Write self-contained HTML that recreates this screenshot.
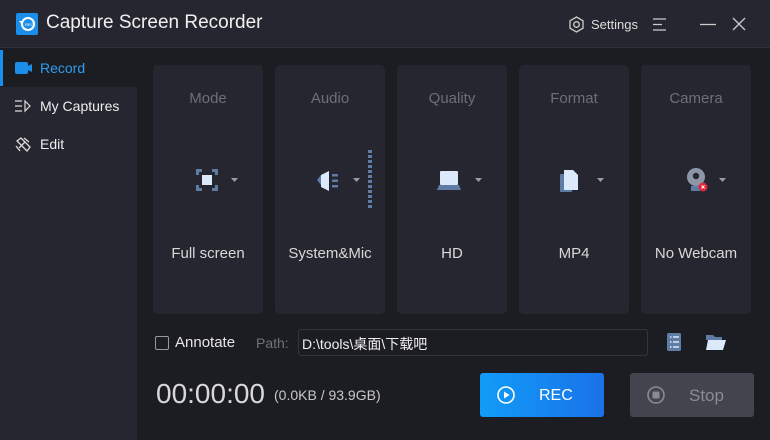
<!DOCTYPE html>
<html><head><meta charset="utf-8"><style>
*{margin:0;padding:0;box-sizing:border-box}
body{width:770px;height:440px;background:#1c1d22;font-family:"Liberation Sans","Noto Sans CJK SC",sans-serif;position:relative;overflow:hidden;color:#e6e6e6}
.title{position:absolute;left:0;top:0;width:770px;height:48px;background:#25262f;border-bottom:1px solid #30313a}
.abs{position:absolute}
.side{position:absolute;left:0;top:87px;width:137px;height:353px;background:#25262f}
.card{position:absolute;top:65px;width:110px;height:249px;background:#25262f;border-radius:5px;text-align:center}
.card .h{position:absolute;top:25px;width:100%;font-size:15px;color:#6e6f76}
.card .v{position:absolute;top:180px;width:100%;font-size:15px;color:#d8d8d8}
.card svg{position:absolute;left:0;top:101px}
.tri{fill:#9a9ba3}
</style></head><body>
<div class="title"></div>
<svg class="abs" style="left:16px;top:13px" width="22" height="22"><rect width="22" height="22" rx="2" fill="#1a8ee8"/><circle cx="12" cy="11" r="6" fill="none" stroke="#fff" stroke-width="2"/><path d="M3 8l4 0 0 5z" fill="#fff"/><text x="9" y="13" font-size="4" fill="#fff" font-family="Liberation Sans">REC</text></svg>
<div class="abs" style="left:46px;top:12px;font-size:19px;color:#f0f0f0">Capture Screen Recorder</div>
<svg class="abs" style="left:568px;top:16px" width="17" height="17"><path d="M8.5 1l6.5 3.75v7.5L8.5 16 2 12.25v-7.5z" fill="none" stroke="#ccc" stroke-width="1.3"/><circle cx="8.5" cy="8.5" r="2.8" fill="none" stroke="#ccc" stroke-width="1.3"/></svg>
<div class="abs" style="left:591px;top:17px;font-size:13px;color:#ddd">Settings</div>
<svg class="abs" style="left:652px;top:17px" width="16" height="15"><path d="M1 2h13M1 7.5h9M1 13h13" stroke="#ccc" stroke-width="1.3"/></svg>
<svg class="abs" style="left:699px;top:17px" width="20" height="15"><path d="M1 7.5h16" stroke="#ccc" stroke-width="1.3"/></svg>
<svg class="abs" style="left:732px;top:17px" width="15" height="15"><path d="M1 1l12 12M13 1L1 13" stroke="#ccc" stroke-width="1.3"/></svg>

<div class="abs" style="left:0;top:50px;width:3px;height:36px;background:#1a8ee8"></div>
<svg class="abs" style="left:15px;top:62px" width="18" height="12"><rect x="0" y="0" width="13" height="12" rx="2" fill="#1a8ee8"/><path d="M13 4l4-2v8l-4-2z" fill="#1a8ee8"/></svg>
<div class="abs" style="left:40px;top:60px;font-size:14px;color:#2e9cf0">Record</div>
<div class="side"></div>
<svg class="abs" style="left:15px;top:99px" width="16" height="14"><path d="M0 2h7M0 7h7M0 12h7M10 2l5 5-5 5z" fill="none" stroke="#ddd" stroke-width="1.2"/></svg>
<div class="abs" style="left:40px;top:98px;font-size:14px;color:#eee">My Captures</div>
<svg class="abs" style="left:14px;top:136px" width="17" height="17"><path d="M3 5l4-3 9 9-3 4zM2 10l4 5M10 2l5 4M5 12l6-6" fill="none" stroke="#ddd" stroke-width="1.3"/></svg>
<div class="abs" style="left:40px;top:136px;font-size:14px;color:#eee">Edit</div>

<div class="card" style="left:153px"><div class="h">Mode</div>
<svg width="110" height="30"><path d="M43 3h6v3h-3v3h-3zM65 3h-6v3h3v3h3zM43 25h6v-3h-3v-3h-3zM65 25h-6v-3h3v-3h3z" fill="#5f7da4"/><rect x="49" y="9" width="10" height="10" fill="#dce9fb"/><path class="tri" d="M78 12h7l-3.5 4z"/></svg>
<div class="v">Full screen</div></div>
<div class="card" style="left:275px"><div class="h">Audio</div>
<svg width="110" height="30"><path d="M42 14l4-5v10z" fill="#5f7da4"/><path d="M46 9l8-4v20l-8-4z" fill="#dce9fb"/><path d="M57 8h6v2.5h-6zM57 13.5h6v2.5h-6zM57 19h6v2.5h-6z" fill="#5f7da4"/><path class="tri" d="M78 12h7l-3.5 4z"/></svg>
<svg width="110" height="62" style="top:84px"><path d="M93 1h4v3h-4zM93 6h4v3h-4zM93 11h4v3h-4zM93 16h4v3h-4zM93 21h4v3h-4zM93 26h4v3h-4zM93 31h4v3h-4zM93 36h4v3h-4zM93 41h4v3h-4zM93 46h4v3h-4zM93 51h4v3h-4zM93 56h4v3h-4z" fill="#5f7da4"/></svg>
<div class="v">System&amp;Mic</div></div>
<div class="card" style="left:397px"><div class="h">Quality</div>
<svg width="110" height="30"><rect x="43" y="5" width="18" height="14" rx="1" fill="#dce9fb"/><path d="M42 19h20l2 5H40z" fill="#5f7da4"/><path class="tri" d="M78 12h7l-3.5 4z"/></svg>
<div class="v">HD</div></div>
<div class="card" style="left:519px"><div class="h">Format</div>
<svg width="110" height="30"><rect x="41" y="8" width="12" height="18" rx="1" fill="#5f7da4"/><path d="M45 4h9l5 5v15H45z" fill="#dce9fb"/><path class="tri" d="M78 12h7l-3.5 4z"/></svg>
<div class="v">MP4</div></div>
<div class="card" style="left:641px"><div class="h">Camera</div>
<svg width="110" height="30"><circle cx="55" cy="11" r="9" fill="#8c96a6"/><circle cx="55" cy="10" r="3.2" fill="#25262f"/><path d="M50 20h9v5h-9z" fill="#5f7da4"/><circle cx="62" cy="21" r="4.5" fill="#e0283c"/><path d="M60.5 19.5l3 3M63.5 19.5l-3 3" stroke="#fff" stroke-width="0.9"/><path class="tri" d="M78 12h7l-3.5 4z"/></svg>
<div class="v">No Webcam</div></div>

<div class="abs" style="left:155px;top:336px;width:14px;height:14px;border:1px solid #999;border-radius:2px"></div>
<div class="abs" style="left:175px;top:334px;font-size:15px;color:#e6e6e6">Annotate</div>
<div class="abs" style="left:256px;top:335px;font-size:14px;color:#70717a">Path:</div>
<div class="abs" style="left:298px;top:329px;width:350px;height:27px;border:1px solid #33343c;border-radius:3px;background:#1c1d22"></div>
<div class="abs" style="left:302px;top:334px;font-size:14px;color:#f0f0f0">D:\tools\桌面\下载吧</div>
<svg class="abs" style="left:666px;top:333px" width="16" height="18"><rect x="1" y="0" width="14" height="18" rx="1.5" fill="#5f7da4"/><path d="M4 4h1.5M7 4h6M4 9h1.5M7 9h6M4 14h1.5M7 14h6" stroke="#dce9fb" stroke-width="1.4"/></svg>
<svg class="abs" style="left:705px;top:333px" width="22" height="18"><path d="M1 2h7l2 2h7v3H1z" fill="#5f7da4"/><path d="M3 7h18l-3 10H1z" fill="#dce9fb"/></svg>

<div class="abs" style="left:156px;top:378px;font-size:28px;color:#d8d8d8">00:00:00</div>
<div class="abs" style="left:274px;top:387px;font-size:14px;color:#c8c8c8">(0.0KB / 93.9GB)</div>
<div class="abs" style="left:480px;top:373px;width:124px;height:44px;border-radius:3px;background:linear-gradient(90deg,#119cf8,#1a72e8)"></div>
<svg class="abs" style="left:496px;top:385px" width="20" height="20"><circle cx="10" cy="10" r="8" fill="none" stroke="#fff" stroke-width="1.6"/><path d="M8 6.5v7l5.5-3.5z" fill="#fff"/></svg>
<div class="abs" style="left:539px;top:387px;font-size:16px;color:#fff">REC</div>
<div class="abs" style="left:630px;top:373px;width:124px;height:44px;border-radius:3px;background:#43444d"></div>
<svg class="abs" style="left:646px;top:385px" width="20" height="20"><circle cx="10" cy="10" r="8" fill="none" stroke="#8a8b92" stroke-width="1.6"/><rect x="6.5" y="6.5" width="7" height="7" rx="1" fill="#8a8b92"/></svg>
<div class="abs" style="left:689px;top:386px;font-size:17px;color:#8a8b92">Stop</div>
</body></html>
